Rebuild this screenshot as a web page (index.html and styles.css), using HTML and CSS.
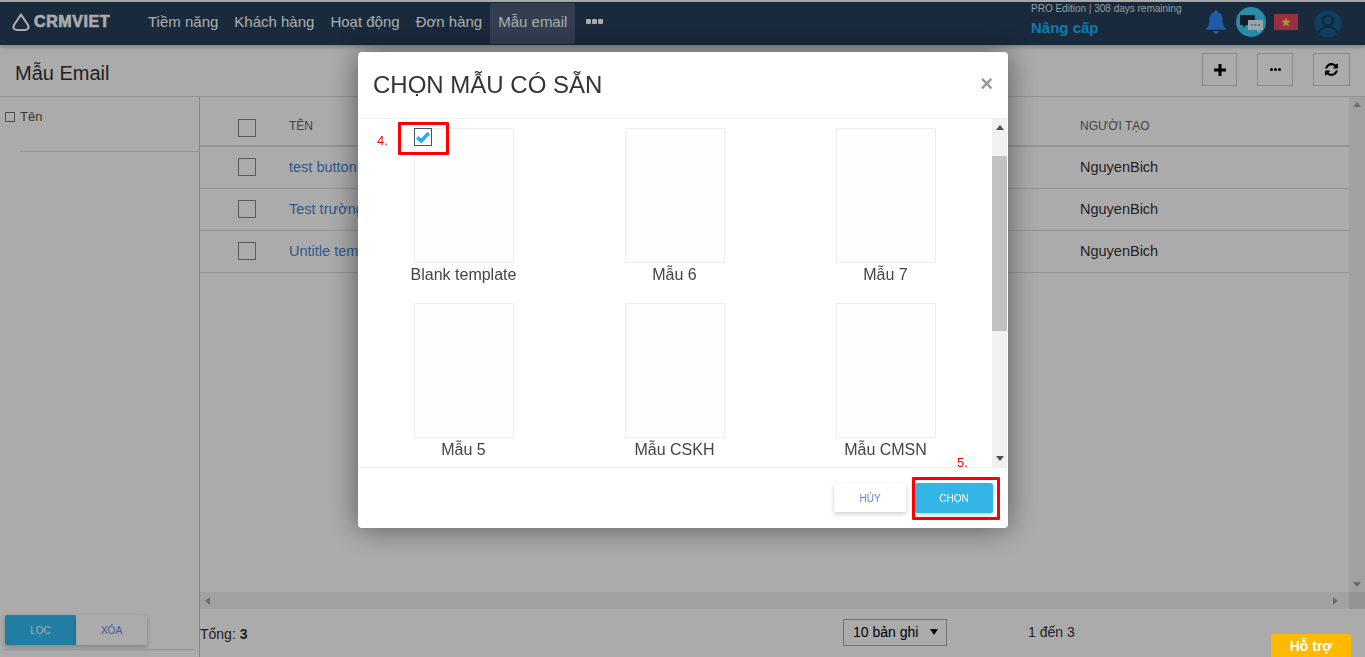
FILE: index.html
```html
<!DOCTYPE html>
<html lang="en">
<head>
  <meta charset="UTF-8">
  <title>Mẫu Email | CRMVIET</title>
  <link rel="stylesheet" href="styles.css">
</head>
<body>
  <header class="topbar">
    <div class="logo">
      <svg class="logo-mark" viewBox="0 0 20 20" width="20" height="20"><path d="M10 2.500 L17 13 Q19 17.500 14 18 L6 18 Q1 17.500 3 13 Z" fill="none" stroke="#fff" stroke-width="2.200" stroke-linejoin="round"/></svg>
      <span class="logo-text">CRMVIET</span>
    </div>
    <nav class="menu">
      <a href="#">Tiềm năng</a>
      <a href="#">Khách hàng</a>
      <a href="#">Hoạt động</a>
      <a href="#">Đơn hàng</a>
      <a href="#" class="active">Mẫu email</a>
      <span class="more-dots"><i></i><i></i><i></i></span>
    </nav>
    <div class="edition">
      <p class="edition-days">PRO Edition | 308 days remaining</p>
      <a href="#" class="upgrade">Nâng cấp</a>
    </div>
    <div class="top-icons">
      <svg class="bell" viewBox="0 0 22 26" width="20" height="24"><path d="M11 0a2 2 0 0 1 2 2.300c3.600.9 5.200 3.900 5.200 7.700 0 4.500.8 7.300 3.300 10v1.500H.5V20c2.500-2.700 3.300-5.500 3.300-10 0-3.800 1.600-6.800 5.200-7.700A2 2 0 0 1 11 0zM8 23h6a3 3 0 0 1-6 0z" fill="#2f86ff"/></svg>
      <svg class="chat" viewBox="0 0 30 30" width="30" height="30">
        <circle cx="15" cy="15" r="15" fill="#3fd0fb"/>
        <path d="M4 8h15v10H10l-3 3v-3H4z" fill="#17303f"/>
        <path d="M12 13h15v10h-3v3l-3-3h-9z" fill="#e6f4fa"/>
        <circle cx="16" cy="18" r="1" fill="#3fa0c8"/><circle cx="19.500" cy="18" r="1" fill="#3fa0c8"/><circle cx="23" cy="18" r="1" fill="#3fa0c8"/>
      </svg>
      <svg class="flag" viewBox="0 0 24 16" width="24" height="16">
        <rect width="24" height="16" fill="#e5485f"/>
        <path d="M12 3.500l1.300 3.300 3.500.1-2.800 2.100 1 3.400-3-2-3 2 1-3.400-2.800-2.100 3.500-.1z" fill="#ffe14d"/>
      </svg>
      <svg class="avatar" viewBox="0 0 28 28" width="28" height="28">
        <circle cx="14" cy="14" r="13.500" fill="#135f92"/>
        <circle cx="14" cy="10.500" r="5" fill="none" stroke="#1d2f44" stroke-width="1.600"/>
        <path d="M5 23c1.500-5 5-6 9-6s7.500 1 9 6" fill="none" stroke="#1d2f44" stroke-width="1.600"/>
      </svg>
    </div>
  </header>

  <div class="titlebar">
    <h1>Mẫu Email</h1>
    <div class="title-actions">
      <button class="tool-btn plus-btn">
        <svg viewBox="0 0 12 12" width="12" height="12"><path d="M6 0v12M0 6h12" stroke="#000" stroke-width="3"/></svg>
      </button>
      <button class="tool-btn dots-btn"><i></i><i></i><i></i></button>
      <button class="tool-btn refresh-btn">
        <svg viewBox="0 0 1536 1536" width="13" height="13"><path d="M1511 928q0 5-1 7-64 268-268 434.500t-478 166.500q-146 0-282.500-55t-243.500-157l-129 129q-19 19-45 19t-45-19-19-45v-448q0-26 19-45t45-19h448q26 0 45 19t19 45-19 45l-137 137q71 66 161 102t187 36q134 0 250-65t186-179q11-17 53-117 8-23 30-23h192q13 0 22.500 9.500t9.500 22.500zm25-800v448q0 26-19 45t-45 19h-448q-26 0-45-19t-19-45 19-45l138-138q-148-137-349-137-134 0-250 65t-186 179q-11 17-53 117-8 23-30 23h-199q-13 0-22.500-9.500t-9.500-22.500v-7q65-268 270-434.500t480-166.500q146 0 284 55.500t245 156.500l130-129q19-19 45-19t45 19 19 45z" fill="#000"/></svg>
      </button>
    </div>
  </div>

  <div class="content">
    <aside class="sidebar">
      <label class="filter-field"><span class="small-check"></span>Tên</label>
      <div class="filter-line"></div>
      <div class="filter-actions">
        <button class="filter-btn apply">LỌC</button>
        <button class="filter-btn clear">XÓA</button>
      </div>
      <div class="filter-bottom-line"></div>
    </aside>

    <main class="main">
      <div class="table-wrap">
        <div class="table">
          <div class="row head">
            <span class="check"></span>
            <span class="head-label">TÊN</span>
            <span class="head-label">NGƯỜI TẠO</span>
          </div>
          <div class="row">
            <span class="check"></span>
            <a href="#">test button</a>
            <span>NguyenBich</span>
          </div>
          <div class="row">
            <span class="check"></span>
            <a href="#">Test trường</a>
            <span>NguyenBich</span>
          </div>
          <div class="row">
            <span class="check"></span>
            <a href="#">Untitle template</a>
            <span>NguyenBich</span>
          </div>
        </div>
        <div class="scroll-v">
          <span class="arrow up"></span>
          <span class="arrow down"></span>
        </div>
      </div>
      <div class="scroll-h">
        <span class="arrow left"></span>
        <span class="arrow right"></span>
        <span class="scroll-corner"></span>
      </div>
      <div class="pager">
        <span class="total">Tổng: <b>3</b></span>
        <div class="page-size">10 bản ghi<span class="caret"></span></div>
        <span class="range">1 đến 3</span>
      </div>
    </main>
  </div>

  <!-- Overlay -->
  <div class="overlay">
    <div class="modal">
      <div class="modal-head">
        <h2>CHỌN MẪU CÓ SẴN</h2>
        <span class="close-btn">&times;</span>
      </div>
      <div class="modal-body">
        <div class="templates">
          <div class="template">
            <div class="thumb">
              <span class="thumb-check">
                <svg viewBox="0 0 18 18" width="16" height="16"><path d="M2.500 9.500l4.500 4L15.500 4.500" fill="none" stroke="#1fb1f7" stroke-width="4"/></svg>
              </span>
            </div>
            <p>Blank template</p>
          </div>
          <div class="template"><div class="thumb"></div><p>Mẫu 6</p></div>
          <div class="template"><div class="thumb"></div><p>Mẫu 7</p></div>
          <div class="template"><div class="thumb"></div><p>Mẫu 5</p></div>
          <div class="template"><div class="thumb"></div><p>Mẫu CSKH</p></div>
          <div class="template"><div class="thumb"></div><p>Mẫu CMSN</p></div>
        </div>
        <div class="modal-scroll">
          <span class="arrow up"></span>
          <span class="modal-thumb"></span>
          <span class="arrow down"></span>
        </div>
      </div>
      <div class="modal-foot">
        <button class="modal-btn cancel">HỦY</button>
        <button class="modal-btn choose">CHỌN</button>
      </div>
      <!-- Red guide marks -->
      <span class="step step-4">4.</span>
      <span class="mark mark-4"></span>
      <span class="step step-5">5.</span>
      <span class="mark mark-5"></span>
    </div>
  </div>

  <a href="#" class="support">Hỗ trợ</a>
</body>
</html>
```

FILE: styles.css
```css
* {
  box-sizing: border-box;
}
html, body {
  height: 100%;
}
body {
  margin: 0;
  overflow: hidden;
  display: flex;
  flex-direction: column;
  font-family: "Liberation Sans", Arial, sans-serif;
  font-size: 14px;
  background-color: #fff;
  color: #333;
}
a {
  text-decoration: none;
}
p, h1, h2 {
  margin: 0;
  font-weight: normal;
}
button {
  font-family: inherit;
  cursor: pointer;
}

/* Top bar */
.topbar {
  flex: none;
  height: 43px;
  margin-top: 2px;
  padding: 1px 0;
  display: flex;
  background-color: #263f5a;
  box-shadow: 0 2px 4px rgba(0, 0, 0, 0.25);
  position: relative;
  color: #fff;
}
.logo {
  width: 140px;
  padding: 0 0 3px 11px;
  display: flex;
  align-items: center;
  gap: 3px;
}
.logo-text {
  font-size: 16px;
  font-weight: bold;
  letter-spacing: 0.6px;
  -webkit-text-stroke: 0.6px #fff;
}
.menu {
  display: flex;
  align-items: stretch;
}
.menu a {
  padding: 0 8px;
  line-height: 37px;
  font-size: 15px;
  color: #fff;
}
.menu a.active {
  background-color: #4c5e7a;
}
.more-dots {
  margin-left: 11px;
  display: flex;
  align-items: center;
  gap: 1px;
  padding-bottom: 4px;
}
.more-dots i {
  width: 5px;
  height: 5px;
  border-radius: 1px;
  background-color: #fff;
}
.edition {
  margin-left: auto;
  width: 175px;
}
.edition-days {
  font-size: 10px;
  line-height: 12px;
  color: #dfe3e8;
}
.upgrade {
  display: block;
  margin-top: 4px;
  font-size: 15px;
  font-weight: bold;
  color: #11b9ff;
}
.top-icons {
  width: 159px;
  display: flex;
  align-items: center;
  padding-bottom: 3px;
}
.bell {
  margin-right: 10px;
}
.chat {
  margin-right: 8px;
}
.flag {
  margin-right: 16px;
}
.avatar {
  margin-top: 4px;
}

/* Page title */
.titlebar {
  flex: none;
  height: 52px;
  display: flex;
  align-items: center;
  justify-content: space-between;
  padding: 0 15px;
  border-bottom: 1px solid #ddd;
}
.titlebar h1 {
  font-size: 20px;
  color: #333;
  padding-top: 6px;
}
.title-actions {
  display: flex;
  gap: 20px;
  align-self: flex-start;
  margin-top: 8px;
}
.tool-btn {
  width: 36px;
  height: 33px;
  padding: 0;
  border: 1px solid #ccc;
  background: none;
  display: flex;
  align-items: center;
  justify-content: center;
  color: #000;
}
.plus-btn {
  width: 35px;
}
.dots-btn {
  gap: 1px;
}
.dots-btn i {
  width: 3px;
  height: 3px;
  border-radius: 50%;
  background-color: #000;
}
.refresh-btn {
  width: 37px;
}

/* Content */
.content {
  flex: 1;
  min-height: 0;
  display: flex;
}
.sidebar {
  width: 200px;
  flex: none;
  border-right: 1px solid #c8c8c8;
  padding: 12px 0 7px;
  display: flex;
  flex-direction: column;
}
.filter-field {
  display: flex;
  align-items: center;
  gap: 5px;
  padding-left: 5px;
  font-size: 13px;
  line-height: 16px;
  color: #555;
}
.small-check {
  width: 10px;
  height: 10px;
  border: 1px solid #777;
}
.filter-line {
  height: 1px;
  margin: 26px 0 0 20px;
  background-color: #ddd;
}
.filter-actions {
  margin-top: auto;
  padding-left: 5px;
  display: flex;
}
.filter-btn {
  width: 71px;
  height: 30px;
  padding: 0;
  border: none;
  border-radius: 2px;
  font-size: 10px;
  box-shadow: 0 2px 5px rgba(0, 0, 0, 0.25);
}
.filter-btn.apply {
  background-color: #33bdf2;
  color: #fff;
}
.filter-btn.clear {
  background-color: #fff;
  color: #5d86e6;
}
.filter-bottom-line {
  height: 1px;
  margin: 4px 5px 0;
  background-color: #ddd;
}

.main {
  flex: 1;
  min-width: 0;
  display: flex;
  flex-direction: column;
}
.table-wrap {
  flex: 1;
  min-height: 0;
  display: flex;
}
.table {
  flex: 1;
}
.row {
  display: grid;
  grid-template-columns: 51px 791px 1fr;
  align-items: center;
  height: 42px;
  padding: 0 0 1px 38px;
  border-bottom: 1px solid #ddd;
  font-size: 14.500px;
  color: #333;
}
.row a {
  color: #3f86d8;
}
.row.head {
  height: 50px;
  padding: 13px 0 0 38px;
  border-bottom-width: 2px;
  font-size: 12px;
  color: #666;
}
.head-label {
  margin-bottom: 4px;
}
.check {
  width: 18px;
  height: 18px;
  border: 1px solid #888;
  background-color: #fff;
}

/* Scroll bars */
.scroll-v {
  width: 16px;
  flex: none;
  background-color: #f1f1f1;
  display: flex;
  flex-direction: column;
  align-items: center;
  justify-content: space-between;
  padding: 5px 0;
}
.scroll-v .arrow.up {
  border-bottom-color: #a3a3a3;
}
.scroll-v .arrow.down {
  border-top-color: #a3a3a3;
}
.scroll-h {
  flex: none;
  height: 17px;
  background-color: #f1f1f1;
  display: flex;
  align-items: center;
  padding-left: 5px;
}
.scroll-corner {
  width: 16px;
  height: 17px;
  background-color: #dcdcdc;
}
.arrow {
  width: 0;
  height: 0;
  border: 4px solid transparent;
  display: block;
}
.arrow.up {
  border-top: none;
  border-bottom: 5px solid #505050;
}
.arrow.down {
  border-bottom: none;
  border-top: 5px solid #505050;
}
.arrow.left {
  border-left: none;
  border-right: 5px solid #a3a3a3;
}
.arrow.right {
  margin-left: auto;
  margin-right: 11px;
  border-right: none;
  border-left: 5px solid #a3a3a3;
}

/* Pager */
.pager {
  flex: none;
  height: 48px;
  display: grid;
  grid-template-columns: 643px 185px 1fr;
  align-items: center;
}
.total {
  padding-top: 1px;
}
.page-size {
  width: 104px;
  height: 27px;
  padding: 0 9px;
  border: 1px solid #aaa;
  display: flex;
  align-items: center;
  justify-content: space-between;
  color: #000;
  margin-top: -2px;
}
.caret {
  border: 4px solid transparent;
  border-bottom: none;
  border-top: 6px solid #000;
  margin-right: -1px;
}
.range {
  margin-top: -2px;
}

/* Overlay */
.overlay {
  position: fixed;
  top: 0;
  left: 0;
  width: 100%;
  height: 100%;
  padding: 52px 0 0 1px;
  display: flex;
  justify-content: center;
  align-items: flex-start;
  background-color: rgba(0, 0, 0, 0.33);
}
.modal {
  width: 650px;
  height: 476px;
  position: relative;
  display: flex;
  flex-direction: column;
  background-color: #fff;
  border-radius: 4px;
  box-shadow: 0 0 30px rgba(0, 0, 0, 0.5);
}
.modal-head {
  flex: none;
  height: 67px;
  display: flex;
  align-items: center;
  justify-content: space-between;
  padding: 0 15px;
  border-bottom: 1px solid #f0f0f0;
}
.modal-head h2 {
  font-size: 24px;
  color: #333;
}
.close-btn {
  font-size: 22px;
  font-weight: bold;
  color: #999;
  margin-top: -2px;
}
.modal-body {
  flex: 1;
  min-height: 0;
  display: flex;
}
.templates {
  flex: 1;
  min-width: 0;
  overflow: hidden;
  padding-top: 9px;
  display: grid;
  grid-template-columns: repeat(3, 211px);
  grid-auto-rows: 175px;
  justify-items: center;
}
.template {
  width: 110px;
  display: flex;
  flex-direction: column;
  align-items: center;
  white-space: nowrap;
}
.thumb {
  width: 100px;
  height: 135px;
  border: 1px solid #eee;
  background-color: #fdfdfd;
  position: relative;
}
.thumb-check {
  position: absolute;
  top: -1px;
  left: -1px;
  width: 18px;
  height: 18px;
  border: 1px solid #4a5564;
  background-color: #fff;
  display: flex;
}
.template p {
  margin-top: 3px;
  font-size: 16px;
  line-height: 18px;
  color: #444;
}
.modal-scroll {
  width: 15px;
  margin-right: 1px;
  flex: none;
  background-color: #f1f1f1;
  display: flex;
  flex-direction: column;
  align-items: center;
  padding: 6px 0;
}
.modal-thumb {
  width: 100%;
  height: 175px;
  margin: 26px 0 auto;
  background-color: #c1c1c1;
}
.modal-foot {
  flex: none;
  height: 61px;
  display: flex;
  justify-content: flex-end;
  align-items: flex-start;
  gap: 9px;
  padding: 16px 15px 0 0;
  border-top: 1px solid #f0f0f0;
}
.modal-btn {
  padding: 0;
  border: none;
  border-radius: 2px;
  font-size: 10px;
  box-shadow: 0 2px 5px rgba(0, 0, 0, 0.2);
}
.modal-btn.cancel {
  width: 72px;
  height: 28px;
  background-color: #fff;
  color: #5d86e6;
}
.modal-btn.choose {
  width: 78px;
  height: 30px;
  background-color: #33b5e5;
  color: #fff;
  margin-top: -1px;
}

/* Red guide marks */
.step {
  position: absolute;
  font-size: 13px;
  color: #f00;
}
.step-4 {
  top: 81px;
  left: 19px;
}
.step-5 {
  top: 403px;
  left: 599px;
}
.mark {
  position: absolute;
  border: 3px solid #f00;
  border-radius: 1px;
}
.mark-4 {
  top: 70px;
  left: 40px;
  width: 51px;
  height: 33px;
}
.mark-5 {
  top: 425px;
  left: 554px;
  width: 88px;
  height: 43px;
}

.support {
  position: fixed;
  right: 14px;
  bottom: 0;
  width: 80px;
  height: 23px;
  line-height: 24px;
  text-align: center;
  font-size: 14px;
  font-weight: bold;
  color: #fff;
  background-color: #ffba00;
  border-radius: 3px 3px 0 0;
}
```
